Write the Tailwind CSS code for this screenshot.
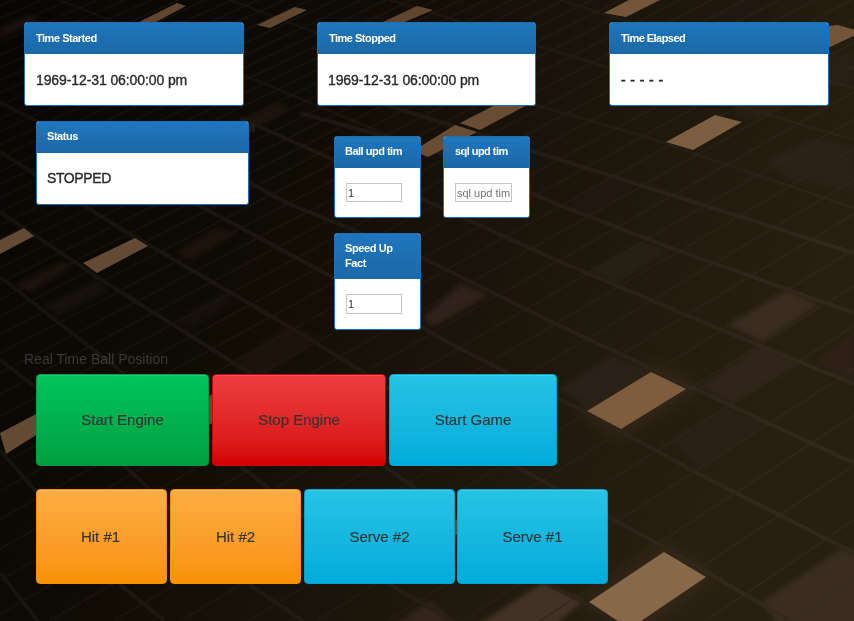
<!DOCTYPE html>
<html lang="en">
<head>
<meta charset="utf-8">
<title>Ball Engine</title>
<script src="https://cdn.jsdelivr.net/npm/@tailwindcss/browser@4"></script>
</head>
<body class="relative w-[854px] h-[621px] overflow-hidden bg-[#120d06] text-[#333] font-['Liberation_Sans',Arial,sans-serif]">
<svg class="absolute inset-0" width="854" height="621" viewBox="0 0 854 621" aria-hidden="true">
  <defs>
    <linearGradient id="floor" x1="0" y1="0" x2="1" y2="0.35">
      <stop offset="0" stop-color="#080603"/><stop offset=".35" stop-color="#0e0b04"/><stop offset=".65" stop-color="#1b140a"/><stop offset="1" stop-color="#272011"/>
    </linearGradient>
    <linearGradient id="fade" gradientUnits="userSpaceOnUse" x1="0" y1="0" x2="854" y2="300">
      <stop offset="0" stop-color="#14110d"/><stop offset=".5" stop-color="#221b14"/><stop offset="1" stop-color="#35291e"/>
    </linearGradient>
    <filter id="soft" color-interpolation-filters="sRGB"><feGaussianBlur stdDeviation="2.5"/></filter>
    <filter id="edge" color-interpolation-filters="sRGB"><feGaussianBlur stdDeviation=".6"/></filter>
    <filter id="glow" color-interpolation-filters="sRGB" x="-30%" y="-30%" width="160%" height="160%"><feGaussianBlur stdDeviation="8"/></filter>
  </defs>
  <rect width="854" height="621" fill="url(#floor)"/>
  <g filter="url(#glow)" fill="#4a3424" opacity=".4">
    <path d="M575 413L654 362L702 387L621 440ZM578 602L664 544L716 577L643 630Z"/>
  </g>
  <g filter="url(#soft)">
    <path fill="#3b2c22" d="M728 325L787 290L818 305L762 341Z"/>
    <path fill="#31241b" d="M700 386L761 345L800 363L731 404Z"/>
    <path fill="#2f2018" d="M815 362L854 332V378L844 378Z"/>
    <path fill="#3a2d20" d="M762 602L841 549L870 560V640H790Z"/>
    <path fill="#423126" d="M470 630L542 583L584 600L550 630Z"/>
    <path fill="#33251b" d="M394 625L430 601L450 618L445 630Z"/>
    <path fill="#30221a" d="M423 318L460 284L489 295L433 327Z"/>
    <path fill="#2e2218" d="M730 112L770 92L800 100L760 120ZM742 85L790 62L854 52V82L800 95Z" opacity=".6"/>
    <path fill="#2a2217" d="M765 160L815 138L854 146V190L790 180Z"/>
    <path fill="#262014" d="M592 270L640 242L670 250L614 285Z"/>
    <path fill="#2a2118" d="M560 388L610 356L650 370L590 410Z"/>
    <path fill="#2b2118" d="M670 440L728 405L768 424L700 470Z" opacity=".7"/>
    <path fill="#1d130c" d="M177 252L215 228L237 233L192 260ZM233 365L285 327L322 337L262 378Z"/>
    <path fill="#20150e" d="M240 122L277 103L290 108L252 130Z"/>
    <path fill="#1c130c" d="M14 286L60 262L76 264L30 292ZM0 28L30 15L40 20L0 38Z"/>
    <path fill="#15110a" d="M42 306L95 280L110 290L58 316ZM172 322L225 292L240 298L190 330Z"/>
    <path fill="#211811" d="M565 208L605 180L640 188L590 214ZM700 10L750 3L770 14L715 22Z"/>
  </g>
  <g stroke="url(#fade)" fill="none" filter="url(#edge)">
    <g stroke-width="4" opacity=".9">
      <path d="M380 103L697 203L854 253M300 113L433 150L554 203L677 250L854 313M240 118L433 204L554 259L717 328L854 384M150 128L287 203L427 260L554 323L691 387L854 463M0 102L217 215L360 292L453 345L587 413L697 473L854 553M0 152L123 230L300 333L513 465L664 547L790 621"/>
      <path d="M0 212L97 277L253 375L407 482L554 587L618 621M0 277L100 355L243 468L390 585L454 621M0 360L33 385L127 468L253 587L303 621M0 450L33 488L123 587L165 621M0 573L38 621"/>
    </g>
    <path stroke-width="2.5" opacity=".6" d="M230 0L420 72L640 135L854 208M390 0L600 65L854 140M560 0L740 58L854 88M60 0L260 82L400 140"/>
    <path id="joints" stroke-width="1.8" opacity=".6"/>
  </g>
  <g fill="#73553a" filter="url(#edge)">
    <path fill="#60462f" d="M139 22L177 3L186 6L152 24ZM257 25L295 7L307 10L270 28ZM383 22L417 6L433 10L400 24Z"/>
    <path d="M604 13L640 -6L660 0L626 17ZM828 26L838 25L862 32L828 48Z"/>
    <path fill="#7c5e41" d="M666 142L715 115L742 122L693 150Z"/>
    <path fill="#684d34" d="M460 123L497 104L529 104L480 130ZM413 151L455 125L477 132L428 157Z"/>
    <path fill="#624a34" d="M0 240L24 228L34 236L0 254ZM83 263L135 238L148 246L97 273ZM0 433L36 414L60 420L6 454Z"/>
    <path fill="#7d5d3e" d="M587 411L651 372L686 389L621 429Z"/>
    <path fill="#87694a" d="M589 602L664 552L706 577L641 621H618Z"/>
    <path fill="#684832" d="M208 397L213 393V423L208 425ZM454 521L459 518V534L454 536Z"/>
  </g>
</svg>
<script>
  // Joints between planks: each one crosses the main seam at x and steepens towards the right.
  (function () {
    var d = '', step = function (x) { return Math.max(13, 8 + 0.033 * x + 0.00002 * x * x); };
    var add = function (x) {
      var y = 413 + (x - 587) * 0.53, s = 0.455 + 0.00027 * x;
      d += 'M' + (x - 900) + ' ' + (y + 900 * s) + 'L' + (x + 900) + ' ' + (y - 900 * s);
    };
    var x;
    for (x = 587; x < 960; x += step(x)) add(x);
    for (x = 587 - step(570); x > -150; x -= step(x)) add(x);
    document.getElementById('joints').setAttribute('d', d);
  })();
</script>

<main class="relative pl-6 pt-[22px]">
  <section class="flex gap-[73px]">
    <div class="w-[220px] h-[84px] rounded-[3px] border border-[#1c70b5] bg-white overflow-hidden">
      <h3 class="h-[31px] pl-[11px] leading-[31px] text-[11px] font-bold tracking-[-0.48px] text-white bg-linear-to-b from-[#1f76bd] to-[#1b68a6]">Time Started</h3>
      <p class="pl-[11px] pt-[16px] text-[14px] leading-5 tracking-[-0.1px] text-[#2a2a2a] [-webkit-text-stroke:0.35px_#2a2a2a]">1969-12-31 06:00:00 pm</p>
    </div>
    <div class="w-[219px] h-[84px] rounded-[3px] border border-[#1c70b5] bg-white overflow-hidden">
      <h3 class="h-[31px] pl-[11px] leading-[31px] text-[11px] font-bold tracking-[-0.5px] text-white bg-linear-to-b from-[#1f76bd] to-[#1b68a6]">Time Stopped</h3>
      <p class="pl-[10px] pt-[16px] text-[14px] leading-5 tracking-[-0.1px] text-[#2a2a2a] [-webkit-text-stroke:0.35px_#2a2a2a]">1969-12-31 06:00:00 pm</p>
    </div>
    <div class="w-[220px] h-[84px] rounded-[3px] border border-[#1c70b5] bg-white overflow-hidden">
      <h3 class="h-[31px] pl-[11px] leading-[31px] text-[11px] font-bold tracking-[-0.55px] text-white bg-linear-to-b from-[#1f76bd] to-[#1b68a6]">Time Elapsed</h3>
      <p class="pl-[11px] pt-[16px] text-[14px] leading-5 tracking-[0.4px] text-[#2a2a2a] [-webkit-text-stroke:0.5px_#2a2a2a]">- - - - -</p>
    </div>
  </section>

  <section class="flex items-start pl-3 pt-[15px] h-[245px]">
    <div class="w-[213px] h-[84px] rounded-[3px] border border-[#1c70b5] bg-white overflow-hidden">
      <h3 class="h-[31px] pl-[10px] leading-[29px] text-[11px] font-bold tracking-[-0.45px] text-white bg-linear-to-b from-[#1f76bd] to-[#1b68a6]">Status</h3>
      <p class="pl-[10px] pt-[15px] text-[14px] leading-5 tracking-[-0.4px] text-[#2a2a2a] [-webkit-text-stroke:0.35px_#2a2a2a]">STOPPED</p>
    </div>
    <span class="w-[85px] text-[10px] leading-[15px] text-[#2c2b29]">ß</span>
    <div class="mt-[15px] grid grid-cols-[87px_87px] gap-x-[22px] gap-y-[15px]">
      <div class="h-[82px] rounded-[3px] border border-[#1c70b5] bg-white overflow-hidden">
        <h3 class="h-[31px] pl-[10px] leading-[29px] text-[11px] font-bold tracking-[-0.5px] whitespace-nowrap text-white bg-linear-to-b from-[#1f76bd] to-[#1b68a6]">Ball upd tim</h3>
        <input class="block ml-[11px] mt-[15px] w-[56px] h-[19px] border border-[#c4c4c4] bg-white px-px text-[11px] text-[#333]" value="1">
      </div>
      <div class="h-[82px] rounded-[3px] border border-[#1c70b5] bg-white overflow-hidden">
        <h3 class="h-[31px] pl-[11px] leading-[29px] text-[11px] font-bold tracking-[-0.55px] whitespace-nowrap text-white bg-linear-to-b from-[#1f76bd] to-[#1b68a6]">sql upd tim</h3>
        <input class="block ml-[11px] mt-[15px] w-[57px] h-[19px] border border-[#c4c4c4] bg-white px-px text-[11px] placeholder:text-[#757575]" placeholder="sql upd tim">
      </div>
      <div class="h-[97px] rounded-[3px] border border-[#1c70b5] bg-white overflow-hidden">
        <h3 class="h-[45px] pl-[10px] pt-[7px] pr-4 leading-[15px] text-[11px] font-bold tracking-[-0.4px] text-white bg-linear-to-b from-[#1f76bd] to-[#1b68a6]">Speed Up Fact</h3>
        <input class="block ml-[11px] mt-[15px] w-[56px] h-[20px] border border-[#c4c4c4] bg-white px-px text-[11px] text-[#333]" value="1">
      </div>
    </div>
  </section>

  <h4 class="h-[23px] text-[14px] leading-[17px] text-[#393939]">Real Time Ball Position</h4>

  <section class="flex gap-[3px] pl-3 text-[15px] text-[#333] [-webkit-text-stroke:0.15px_#333]">
    <button class="w-[173px] h-[92px] rounded-[4px] border border-[#00993f] bg-linear-to-b from-[#00c45c] to-[#009f40] shadow-[inset_0_1px_0_rgba(255,255,255,0.15)]">Start Engine</button>
    <button class="w-[174px] h-[92px] rounded-[4px] border border-[#cc0000] bg-linear-to-b from-[#ee3d40] to-[#d40000] shadow-[inset_0_1px_0_rgba(255,255,255,0.15)]">Stop Engine</button>
    <button class="w-[168px] h-[92px] rounded-[4px] border border-[#00a3cf] bg-linear-to-b from-[#25c3e4] to-[#00acdb] shadow-[inset_0_1px_0_rgba(255,255,255,0.15)]">Start Game</button>
  </section>
  <section class="flex gap-[3px] pl-3 pt-[23px] text-[15px] text-[#333] [-webkit-text-stroke:0.15px_#333]">
    <button class="w-[131px] h-[95px] pt-[2px] pr-[2px] rounded-[4px] border border-[#f58f00] bg-linear-to-b from-[#fdad42] to-[#f99200] shadow-[inset_0_1px_0_rgba(255,255,255,0.15)]">Hit #1</button>
    <button class="w-[131px] h-[95px] pt-[2px] rounded-[4px] border border-[#f58f00] bg-linear-to-b from-[#fdad42] to-[#f99200] shadow-[inset_0_1px_0_rgba(255,255,255,0.15)]">Hit #2</button>
    <button class="w-[151px] h-[95px] pt-[2px] rounded-[4px] border border-[#00a3cf] bg-linear-to-b from-[#25c3e4] to-[#00acdb] shadow-[inset_0_1px_0_rgba(255,255,255,0.15)]">Serve #2</button>
    <button class="-ml-px w-[151px] h-[95px] pt-[2px] rounded-[4px] border border-[#00a3cf] bg-linear-to-b from-[#25c3e4] to-[#00acdb] shadow-[inset_0_1px_0_rgba(255,255,255,0.15)]">Serve #1</button>
  </section>
</main>
</body>
</html>
